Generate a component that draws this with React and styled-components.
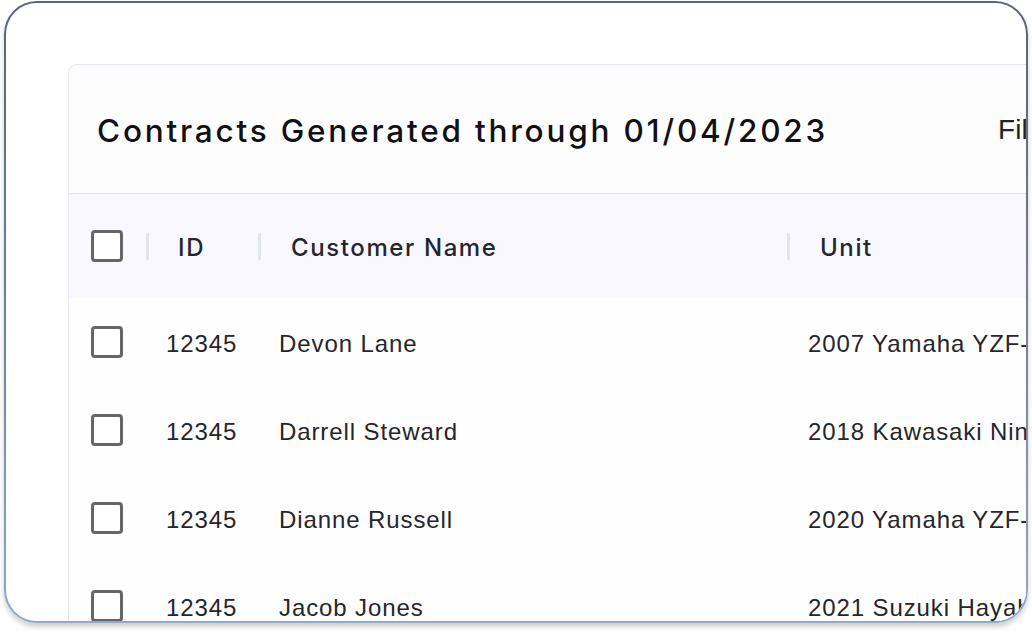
import React from "react";
import styled, { createGlobalStyle } from "styled-components";

const Global = createGlobalStyle`
  html, body { margin: 0; padding: 0; background: #ffffff; }
  body { font-family: "Liberation Sans", Arial, sans-serif; }
  * { box-sizing: border-box; }
`;

const Page = styled.div`
  width: 1032px;
  height: 632px;
  padding: 1px 4px 0 4px;
  background: #ffffff;
`;

const Frame = styled.div`
  width: 1024px;
  height: 622px;
  border-radius: 33px;
  padding: 2px;
  background: linear-gradient(180deg, #5b6479 0%, #6f7f9c 50%, #90a9d0 100%);
  box-shadow: 0 4px 5px rgba(120, 120, 130, 0.35);
`;

const Screen = styled.div`
  width: 100%;
  height: 100%;
  border-radius: 31px;
  background: #ffffff;
  overflow: hidden;
  padding: 61px 0 0 62px;
`;

const Card = styled.div`
  width: 1100px;
  border: 1px solid #e5e7f7;
  border-radius: 9px;
  background: #fdfdfe;
`;

const CardHeader = styled.div`
  height: 129px;
  display: flex;
  align-items: center;
  padding: 2px 0 0 28px;
  border-bottom: 1px solid #e3e5f5;
`;

const Title = styled.h1`
  margin: 0;
  font-family: Inter, "Liberation Sans", sans-serif;
  font-weight: 500;
  font-size: 31.5px;
  letter-spacing: 2.8px;
  color: #111114;
  white-space: nowrap;
`;

const FilterLabel = styled.span`
  margin-left: 170px;
  font-family: "Liberation Sans", Arial, sans-serif;
  font-size: 28px;
  font-weight: 500;
  color: #222226;
`;

const Row = styled.div`
  display: grid;
  grid-template-columns: 77px 112px 529px 1fr;
  align-items: center;
  height: ${(p) => (p.$head ? "104px" : "88px")};
  background: ${(p) => (p.$head ? "#f9f8fe" : "#fefeff")};
`;

const CheckCell = styled.div`
  display: flex;
  align-items: center;
  padding-left: 22px;
`;

const Box = styled.span`
  display: block;
  width: 32px;
  height: 32px;
  border: 3px solid #666668;
  border-radius: 4px;
  background: #ffffff;
`;

const HeadCell = styled.div`
  display: flex;
  align-items: center;
  height: 100%;
`;

const Divider = styled.span`
  width: 3px;
  height: 27px;
  border-radius: 1px;
  background: ${(p) => p.$color || "#e1e4f4"};
  margin-right: ${(p) => p.$gap || 29}px;
`;

const HeadLabel = styled.span`
  padding-top: 2px;
  font-family: Inter, "Liberation Sans", sans-serif;
  font-weight: 500;
  font-size: 24px;
  letter-spacing: 1.6px;
  color: #25252d;
  white-space: nowrap;
`;

const Cell = styled.div`
  padding-left: ${(p) => p.$pad || 21}px;
  padding-top: 4px;
  font-family: "Liberation Sans", Arial, sans-serif;
  font-size: 24px;
  letter-spacing: 0.9px;
  color: #26262a;
  white-space: nowrap;
`;

const rows = [
  { id: "12345", name: "Devon Lane", unit: "2007 Yamaha YZF-R1" },
  { id: "12345", name: "Darrell Steward", unit: "2018 Kawasaki Ninja" },
  { id: "12345", name: "Dianne Russell", unit: "2020 Yamaha YZF-R6" },
  { id: "12345", name: "Jacob Jones", unit: "2021 Suzuki Hayabusa" },
];

export default function App() {
  return (
    <Page>
      <Global />
      <Frame>
        <Screen>
          <Card>
            <CardHeader>
              <Title>Contracts Generated through 01/04/2023</Title>
              <FilterLabel>Filter</FilterLabel>
            </CardHeader>
            <Row $head>
              <CheckCell>
                <Box />
              </CheckCell>
              <HeadCell>
                <Divider $color="#e3e3ea" />
                <HeadLabel>ID</HeadLabel>
              </HeadCell>
              <HeadCell>
                <Divider $gap={30} />
                <HeadLabel>Customer Name</HeadLabel>
              </HeadCell>
              <HeadCell>
                <Divider $gap={30} />
                <HeadLabel>Unit</HeadLabel>
              </HeadCell>
            </Row>
            {rows.map((r, i) => (
              <Row key={i}>
                <CheckCell>
                  <Box />
                </CheckCell>
                <Cell $pad={20}>{r.id}</Cell>
                <Cell>{r.name}</Cell>
                <Cell>{r.unit}</Cell>
              </Row>
            ))}
          </Card>
        </Screen>
      </Frame>
    </Page>
  );
}
